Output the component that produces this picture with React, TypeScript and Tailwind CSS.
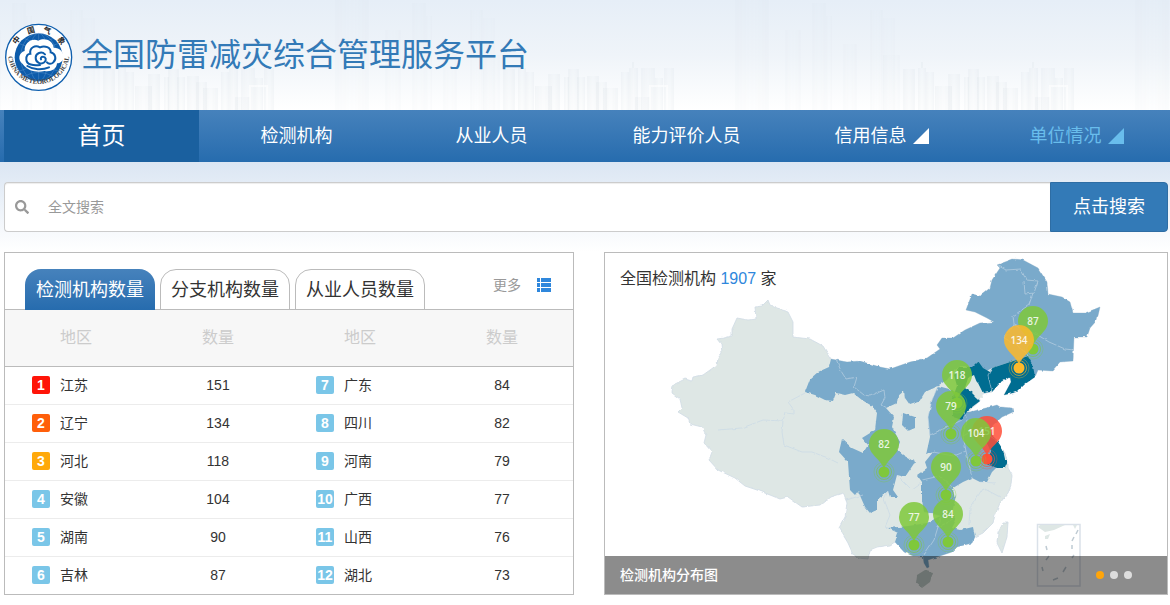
import { FaSearch } from "react-icons/fa";
import clsx from "clsx";

const navItems = [
  { label: "首页", active: true },
  { label: "检测机构" },
  { label: "从业人员" },
  { label: "能力评价人员" },
  { label: "信用信息", arrow: true },
  { label: "单位情况", arrow: true, highlight: true },
];

const tabs = ["检测机构数量", "分支机构数量", "从业人员数量"];

const regions = [
  { name: "江苏", count: 151, badge: "bg-[#ff1408]" },
  { name: "辽宁", count: 134, badge: "bg-[#ff5f0a]" },
  { name: "河北", count: 118, badge: "bg-[#ffa90a]" },
  { name: "安徽", count: 104 },
  { name: "湖南", count: 90 },
  { name: "吉林", count: 87 },
  { name: "广东", count: 84 },
  { name: "四川", count: 82 },
  { name: "河南", count: 79 },
  { name: "广西", count: 77 },
  { name: "山西", count: 76 },
  { name: "湖北", count: 73 },
];

const pins = [
  { x: 1033, y: 321, value: 87, color: "#7fc83b" },
  { x: 1019, y: 340, value: 134, color: "#fdb92b" },
  { x: 957, y: 375, value: 118, color: "#7fc83b" },
  { x: 951, y: 406, value: 79, color: "#7fc83b" },
  { x: 987, y: 431, value: 151, color: "#ff4f38" },
  { x: 976, y: 433, value: 104, color: "#7fc83b" },
  { x: 884, y: 444, value: 82, color: "#7fc83b" },
  { x: 946, y: 467, value: 90, color: "#7fc83b" },
  { x: 948, y: 514, value: 84, color: "#7fc83b" },
  { x: 914, y: 517, value: 77, color: "#7fc83b" },
];

// x, y, width of each building in one 400px tile
const buildings = [
  [0, 0, 34],
  [50, 30, 16],
  [77, 3, 14],
  [91, 16, 6],
  [108, 44, 14],
  [135, 10, 13],
  [148, 18, 12],
  [148, 55, 17],
  [168, 69, 12],
  [183, 68, 8],
  [191, 72, 8],
  [200, 86, 17],
  [213, 74, 12],
  [229, 77, 5],
  [233, 69, 11],
  [242, 77, 8],
  [252, 76, 12],
  [261, 82, 11],
  [268, 88, 15],
  [286, 72, 8],
  [294, 68, 9],
  [300, 97, 15],
  [306, 68, 14],
  [320, 78, 8],
  [329, 68, 10],
];

const logoChars = [
  { char: "中", offset: "21%" },
  { char: "国", offset: "41%" },
  { char: "气", offset: "60%" },
  { char: "象", offset: "80%" },
];

function Skyline() {
  return (
    <svg className="absolute inset-0 size-full opacity-65" aria-hidden="true">
      <defs>
        <linearGradient id="tower" x1="0" y1="0" x2="1" y2="0">
          <stop offset="0" stopColor="#9aabb8" stopOpacity="0.12" />
          <stop offset="0.5" stopColor="#b8c4cc" stopOpacity="0.05" />
          <stop offset="1" stopColor="#8fa3b3" stopOpacity="0.12" />
        </linearGradient>
        <pattern id="city" width="400" height="110" patternUnits="userSpaceOnUse" x="-65">
          {buildings.map(([x, y, w]) => (
            <rect key={`${x}-${y}`} x={x} y={y} width={w} height={110 - y} fill="url(#tower)" opacity={y < 60 ? 0.4 : 1} />
          ))}
          <path d="M187 62v6M298 62v6" stroke="#c9d4dc" strokeWidth="1" opacity="0.5" />
          <path d="M315 110V86h17v24" fill="none" stroke="#fff" strokeWidth="2" opacity="0.7" />
        </pattern>
      </defs>
      <rect width="100%" height="100%" fill="url(#city)" />
    </svg>
  );
}

function Logo() {
  return (
    <svg viewBox="10 70 207 205" className="size-[69px] shrink-0" aria-hidden="true">
      <defs>
        <path id="arc-top" d="M38 172a76 76 0 0 1 152 0" />
        <path id="arc-bottom" d="M22 160a92 92 0 1 0 184 0" />
      </defs>
      <circle cx="114" cy="172" r="99" fill="#fff" stroke="#0f5fae" strokeWidth="4" />
      <circle cx="114" cy="172" r="72" fill="#0d5cab" />
      <g fill="none" stroke="#8fb9e2" strokeWidth="1.2" opacity="0.7">
        <ellipse cx="114" cy="172" rx="28" ry="72" />
        <ellipse cx="114" cy="172" rx="54" ry="72" />
        <path d="M114 100v144M72 116q42 22 84 0M72 228q42-22 84 0M54 130q60 30 120 0M54 214q60-28 120 0" />
      </g>
      <path
        d="M66 192C50 180 54 158 72 153C70 130 92 113 113 122C132 111 157 122 159 143C178 143 190 158 189 172C187 184 178 190 169 190C168 208 149 217 132 213C108 218 82 214 66 192Z"
        fill="#fff"
      />
      <g fill="none" stroke="#0d5cab" strokeWidth="6" strokeLinecap="round">
        <path d="M118 195C98 197 78 195 77 179C76 167 82 161 89 161C86 143 103 134 118 142C133 135 151 143 150 157C164 160 169 177 158 187C151 194 143 192 139 187" />
        <path d="M133 163C122 152 105 160 105 173C105 188 121 195 131 187C139 180 135 170 127 170C122 170 119 174 121 178" />
        <path d="M80 198C97 209 124 211 145 202" />
      </g>
      {logoChars.map(({ char, offset }) => (
        <text key={char} fontSize="23" fontWeight="700" fill="#222" fontFamily="Noto Sans CJK SC, sans-serif">
          <textPath href="#arc-top" startOffset={offset} textAnchor="middle">
            {char}
          </textPath>
        </text>
      ))}
      <text fontSize="20" fontWeight="700" fill="#444" fontFamily="Liberation Serif, serif">
        <textPath href="#arc-bottom" startOffset="50%" textAnchor="middle">
          CHINA METEOROLOGICAL
        </textPath>
      </text>
    </svg>
  );
}

function Header() {
  return (
    <header className="relative bg-linear-to-b from-[#e6eef7] via-[#eff4f9] to-white">
      <Skyline />
      <div className="relative flex h-[110px] items-center gap-2 px-1 pt-1">
        <Logo />
        <h1 className="pb-1 text-[32px] leading-10 text-[#337ab7]">全国防雷减灾综合管理服务平台</h1>
      </div>
    </header>
  );
}

function Nav() {
  return (
    <nav className="overflow-hidden bg-linear-to-b from-[#4682bc] to-[#266cae]">
      <ul className="-mr-1 ml-1 flex">
        {navItems.map((item) => (
          <li key={item.label} className="flex-1">
            <a
              href="#"
              className={clsx(
                "flex h-[52px] items-center justify-center gap-1.5",
                item.active ? "bg-[#1a609f] text-2xl" : "text-lg",
                item.highlight ? "text-[#69bdec]" : "text-white"
              )}
            >
              {item.label}
              {item.arrow && (
                <svg viewBox="0 0 16 16" className="size-4" fill="currentColor" aria-hidden="true">
                  <path d="M16 0v16H0z" />
                </svg>
              )}
            </a>
          </li>
        ))}
      </ul>
    </nav>
  );
}

function SearchBar() {
  return (
    <form className="flex h-[50px]" onSubmit={(e) => e.preventDefault()}>
      <label className="flex flex-1 items-center rounded-l border border-r-0 border-[#ccc] bg-white pl-2.5 shadow-[inset_0_1px_1px_rgba(0,0,0,0.075)]">
        <FaSearch className="size-3.5 text-[#999]" />
        <input
          type="text"
          aria-label="全文搜索"
          placeholder="全文搜索"
          className="h-full flex-1 bg-transparent pl-[19px] text-sm text-[#555] outline-none placeholder:text-[#999]"
        />
      </label>
      <button type="submit" className="w-[118px] rounded-r border border-[#2e6da4] bg-[#337ab7] text-lg text-white">
        点击搜索
      </button>
    </form>
  );
}

function RegionCells({ index }: { index: number }) {
  const region = regions[index];
  return (
    <>
      <td className="p-0">
        <div className="flex items-center gap-2.5 pl-[27px]">
          <span
            className={clsx(
              "flex size-[18px] items-center justify-center rounded-xs text-sm font-bold text-white",
              region.badge ?? "bg-[#7ac6e8]"
            )}
          >
            {index + 1}
          </span>
          {region.name}
        </div>
      </td>
      <td className="p-0 text-center">{region.count}</td>
    </>
  );
}

function RankPanel() {
  return (
    <section className="border border-[#bbb] bg-white">
      <div className="flex h-[57px] items-end border-b border-[#bbb] pl-5">
        <div className="-mb-px flex gap-[5px]">
          {tabs.map((tab, i) => (
            <button
              key={tab}
              type="button"
              className={clsx(
                "h-[41px] w-[130px] rounded-t-2xl text-lg whitespace-nowrap",
                i === 0
                  ? "bg-linear-to-b from-[#4682bc] to-[#266cae] text-white"
                  : "border border-[#bbb] text-[#333]"
              )}
            >
              {tab}
            </button>
          ))}
        </div>
        <a href="#" className="mr-[22px] mb-3.5 ml-auto flex items-center gap-4 text-sm text-[#999]">
          更多
          <svg viewBox="0 0 14 14" className="size-3.5" fill="#2f87dc" aria-hidden="true">
            <path d="M0 0h3v4H0zM4 0h10v4H4zM0 5h3v4H0zM4 5h10v4H4zM0 10h3v4H0zM4 10h10v4H4z" />
          </svg>
        </a>
      </div>
      <table className="w-full table-fixed text-sm text-[#333]">
        <thead>
          <tr className="h-14 border-b border-[#bbb] bg-[#f7f7f7] text-base text-[#ccc]">
            <th className="font-normal">地区</th>
            <th className="font-normal">数量</th>
            <th className="font-normal">地区</th>
            <th className="font-normal">数量</th>
          </tr>
        </thead>
        <tbody>
          {[0, 1, 2, 3, 4, 5].map((row) => (
            <tr key={row} className="h-[38px] border-b border-[#ececec] last:h-[37px] last:border-b-0">
              <RegionCells index={row} />
              <RegionCells index={row + 6} />
            </tr>
          ))}
        </tbody>
      </table>
    </section>
  );
}

function ChinaMap() {
  return (
    <svg viewBox="605 253 562 341" className="block h-auto w-full" role="img">
      <defs>
        <filter id="coast" x="-5%" y="-5%" width="110%" height="110%">
          <feTurbulence type="fractalNoise" baseFrequency="0.16" numOctaves="2" seed="4" result="noise" />
          <feDisplacementMap in="SourceGraphic" in2="noise" scale="3" xChannelSelector="R" yChannelSelector="G" />
        </filter>
      </defs>
      <g filter="url(#coast)" strokeLinejoin="round" strokeWidth="0.8">
        {/* mainland */}
        <path
          fill="#dee7e5"
          stroke="#cfdbe4"
          d="M768 300L762 306L755 307L756 319L748 320L737 318L732 329L732 336L724 338L717 339L721 344L722 353L718 358L717 365L703 375L693 377L692 381L685 379L673 385L672 393L680 399L682 408L678 412L688 418L690 424L702 427L706 435L704 443L712 452L709 460L718 470L735 478L745 486L757 490L770 495L780 499L788 497L802 507L820 505L830 497L843 493L847 503L845 517L839 528L848 543L852 552L857 558L868 559L870 550L877 547L890 545L895 542L904 552L913 556L923 556L924 563L927 568L929 567L928 560L937 557L952 552L957 547L972 543L975 537L983 533L993 523L995 515L1000 503L1008 493L1011 485L1012 475L1008 468L1008 461L1003 450L998 443L990 432L993 425L1002 417L1013 412L1012 408L1000 407L997 405L986 408L978 410L970 412L972 408L980 401L979 395L985 393L992 392L1000 383L1010 377L1011 382L1004 395L1017 392L1025 384L1035 377L1038 370L1052 371L1060 362L1073 361L1074 337L1087 337L1090 328L1097 320L1100 307L1085 313L1073 313L1070 302L1062 297L1048 294L1047 282L1038 268L1023 260L1013 259L997 265L1000 268L992 280L990 288L980 296L972 294L966 310L975 312L987 318L994 322L980 323L965 330L953 338L942 338L937 345L940 349L927 358L910 362L890 369L880 367L860 361L847 362L831 359L823 346L810 339L793 337L793 322L788 312L778 309L770 305Z"
        />
        {/* Gansu, Inner Mongolia, Jilin, Heilongjiang and Sichuan */}
        <path
          fill="#7aaacb"
          d="M831 359L829 367L818 372L810 379L805 392L815 395L825 400L833 401L836 393L845 395L853 393L862 400L872 406L877 413L875 430L862 438L868 445L863 453L852 448L842 439L839 452L848 462L850 490L855 495L858 491L865 507L870 513L877 510L877 500L888 491L890 497L898 497L893 490L897 475L905 477L915 462L903 455L897 450L900 442L892 427L894 417L886 408L897 403L898 396L904 391L905 398L910 405L919 402L925 392L934 388L947 380L955 370L962 366L975 367L978 361L983 373L992 368L1010 362L1028 356L1035 377L1038 370L1052 371L1060 362L1073 361L1074 337L1087 337L1090 328L1097 320L1100 307L1085 313L1073 313L1070 302L1062 297L1048 294L1047 282L1038 268L1023 260L1013 259L997 265L1000 268L992 280L990 288L980 296L972 294L966 310L975 312L987 318L994 322L980 323L965 330L953 338L942 338L937 345L940 349L927 358L910 362L890 369L880 367L860 361L847 362Z"
        />
        <path fill="#7aaacb" d="M903 413L915 417L915 428L908 431L902 425Z" />
        {/* Shanxi, Henan, Shandong, Anhui, Hubei, Hunan, Guangxi and Guangdong */}
        <path
          fill="#7aaacb"
          d="M938 386L932 400L928 417L930 437L926 455L933 452L925 462L927 468L917 475L922 482L922 500L924 512L940 516L927 523L908 526L888 528L898 533L895 542L904 552L913 556L923 556L924 563L927 568L929 567L928 560L937 557L952 552L957 547L972 543L975 537L973 527L960 530L952 528L956 520L952 513L955 500L953 488L963 482L972 478L980 482L987 482L992 472L997 467L1003 460L996 440L990 432L993 425L1002 417L1013 412L1012 408L1000 407L997 405L986 408L970 412L960 412L953 390Z"
        />
        {/* Hebei, Liaoning and Jiangsu */}
        <g fill="#046d91">
          <path d="M972 367L978 361L983 368L990 372L992 383L990 392L983 393L978 383L970 376L965 388L972 393L980 401L968 410L962 420L953 417L953 397L957 386L954 375L960 367Z" />
          <path d="M988 375L992 368L1010 362L1028 356L1033 366L1035 377L1025 384L1017 392L1004 395L1011 382L1010 377L1000 383L992 392Z" />
          <path d="M980 428L989 433L997 440L1003 450L1005 459L1008 461L1005 468L997 468L985 463L991 452Z" />
        </g>
        <path fill="#dee7e5" d="M968 378L974 375L977 383L981 392L982 398L976 397L971 390L965 388Z" />
        {/* province borders */}
        <g fill="none" stroke="#c5d7e6" opacity="0.75">
          <path d="M836 359L841 371L846 379L857 377L854 387L864 395L870 396L884 390L885 398L881 405L886 408" />
          <path d="M718 430L742 428L763 420L783 421L785 413L794 414L794 410L788 402L805 393" />
          <path d="M783 421L782 432L784 445L802 452L812 452L828 458L838 463" />
          <path d="M997 265L1006 270L1021 269L1026 280L1038 281L1034 293L1025 294L1024 281M1033 293L1029 305L1013 316L1014 325L1004 338L1018 345L1028 356M1014 325L1036 334L1049 342L1065 349L1074 350" />
          <path d="M938 386L932 400L928 417L930 435L945 428L962 420M964 412L967 420L963 436L966 451L954 456L933 452M922 480L940 476L953 488M966 451L972 478M963 436L978 428L996 440M924 512L940 516L938 527L934 540L924 555M938 527L953 520M992 368L988 375L992 392" />
          <path d="M888 491L884 499L890 515L885 527L888 528M897 475L912 490L922 483M846 500L863 495M983 488L970 508L969 525M983 488L1000 497M980 482L995 483" />
        </g>
        <path fill="#dee7e5" stroke="#cfdbe4" d="M1008 523L1007 537L1002 553L997 543L998 533L1003 523Z" />
        <path fill="#c4d0cc" d="M925 570L933 572L930 582L922 588L916 583L917 575Z" />
      </g>
      {/* South China Sea inset */}
      <g fill="none" stroke="#dae1e9" strokeWidth="1.5">
        <rect x="1037.5" y="524.5" width="42.5" height="61.5" fill="#fff" />
        <path d="M1038 527L1045 532L1054 530L1065 525H1040ZM1073 525L1075 529L1077 525M1045 536L1050 534L1048 539L1045 539Z" fill="#dee7e5" stroke="none" />
        <path d="M1078 530L1076 534M1074 537L1072 541M1072 545V549M1074 555L1072 558M1066 567L1063 572M1058 578L1053 580M1043 571L1042 567M1046 560L1049 556M1046 546L1047 550" stroke="#bfcbd3" />
      </g>
      {pins.map((pin) => (
        <g key={pin.value} transform={`translate(${pin.x} ${pin.y})`}>
          <g fill="none" stroke={pin.color} strokeWidth="0.8">
            <circle cy="28" r="7.5" opacity="0.8" />
            <circle cy="28" r="10" opacity="0.4" />
          </g>
          <circle cy="28" r="5.5" fill={pin.color} />
          <path d="M0 25C-3 15-15 11-15 0A15 15 0 1 1 15 0C15 11 3 15 0 25Z" fill={pin.color} opacity="0.85" />
          <text
            y="4"
            textAnchor="middle"
            fontSize="10"
            fontWeight="600"
            fill="#fff"
            fillOpacity="0.85"
            fontFamily="Open Sans, sans-serif"
          >
            {pin.value}
          </text>
        </g>
      ))}
    </svg>
  );
}

function MapPanel() {
  return (
    <section className="relative border border-[#bbb] bg-white">
      <ChinaMap />
      <p className="absolute top-3.5 left-[15px] text-base leading-6 text-[#333]">
        全国检测机构 <span className="text-[#2f87dc]">1907</span> 家
      </p>
      <div className="absolute inset-x-0 bottom-0 flex h-[38px] items-center justify-between bg-black/45 pr-[35px] pl-[15px]">
        <span className="text-sm font-medium text-white">检测机构分布图</span>
        <div className="flex gap-1.5">
          <button type="button" aria-label="1" className="size-2 rounded-full bg-[#ffa50a]" />
          <button type="button" aria-label="2" className="size-2 rounded-full bg-[#ddd]" />
          <button type="button" aria-label="3" className="size-2 rounded-full bg-[#ddd]" />
        </div>
      </div>
    </section>
  );
}

function App() {
  return (
    <div className="font-['Liberation_Sans','Noto_Sans_CJK_SC',sans-serif]">
      <Header />
      <Nav />
      <main className="bg-linear-to-b from-[#dbe6f3] to-white to-[90px] pt-5 pr-0.5 pb-2.5 pl-1">
        <SearchBar />
        <div className="mt-5 grid grid-cols-[570fr_564fr] gap-[30px]">
          <RankPanel />
          <MapPanel />
        </div>
      </main>
    </div>
  );
}

export default App;
